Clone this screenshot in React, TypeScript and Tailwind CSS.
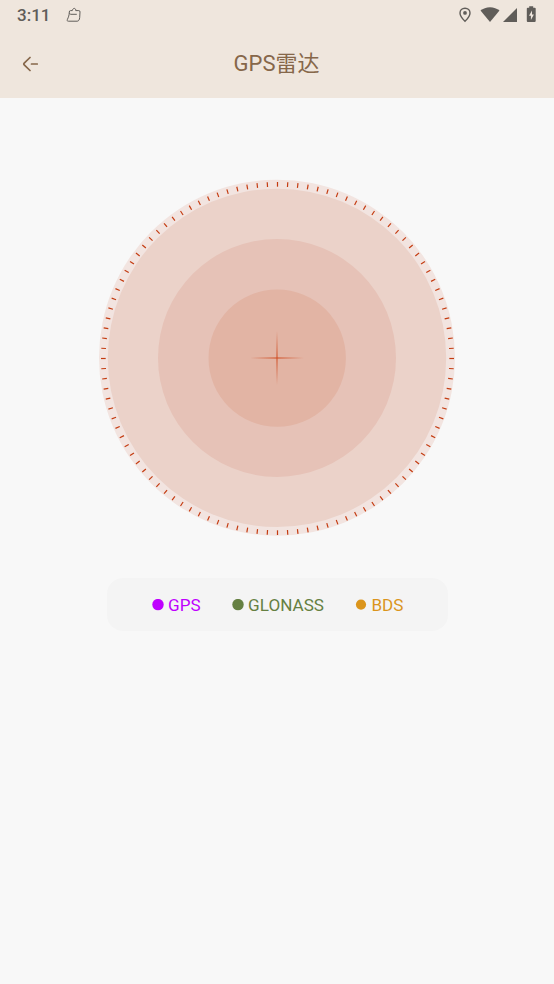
const TICK_COUNT = 108;

const legend = [
  { label: "GPS", text: "text-[#bf00ff]", radius: 5.7 },
  { label: "GLONASS", text: "text-[#658042]", radius: 5.7 },
  { label: "BDS", text: "text-[#db951c]", radius: 5.1 },
];

function StatusBar() {
  return (
    <div className="flex h-[30px] items-center px-[17px] text-[#605d59]">
      <span className="w-[34px] text-[17px] leading-5 font-medium whitespace-nowrap">3:11</span>
      <svg
        className="ml-[15px] h-4 w-4"
        viewBox="0 0 16 16"
        fill="none"
        stroke="currentColor"
        strokeWidth="1"
        strokeLinejoin="round"
      >
        <path d="M4.5 3.6H6.3c.2-1.300 1-2.200 2-2.200s1.600.9 1.400 2.200h3.100c.9 0 1.300.5 1.200 1.400l-.3 5.500c-.2 2.300-1.100 3.700-2.500 3.700H2.300c-1 0-1.400-.6-1-1.500C2.500 10 3.200 8.500 3.300 5c0-.9.4-1.400 1.200-1.400z" />
        <path d="M3.3 6.600l1.500.7h6" />
      </svg>
      <div className="ml-auto flex items-center">
        <svg className="h-4 w-3" viewBox="0 0 12 16" fill="none" stroke="currentColor" strokeWidth="1.4">
          <path d="M6 1.200c-2.900 0-5 2.100-5 4.800C1 9.500 6 14.300 6 14.300s5-4.800 5-8.300c0-2.700-2.100-4.800-5-4.800z" />
          <circle cx="6" cy="5.900" r="1.900" fill="currentColor" stroke="none" />
        </svg>
        <svg className="ml-[9px] h-4 w-5" viewBox="0 0 20 16" fill="currentColor">
          <path d="M.5 3.500C3 1.600 6.300.2 10 .2s7 1.400 9.500 3.300L10 15z" />
        </svg>
        <svg className="ml-[3px] h-4 w-[14px]" viewBox="0 0 14 16" fill="currentColor">
          <path d="M14 1v14H0z" />
        </svg>
        <svg className="ml-[9px] h-4 w-[11px] overflow-visible" viewBox="0 0 11 16" fill="currentColor">
          <path
            fillRule="evenodd"
            d="M3.200-.8h4v1.500h1.600c.5 0 .9.400.9.900v12.500c0 .5-.4.900-.9.900H1.700c-.5 0-.9-.4-.9-.9V1.600c0-.5.4-.9.900-.9h1.500zM6 3.500L3 8.700h1.900v4.200L7.900 7.600H6z"
          />
        </svg>
      </div>
    </div>
  );
}

function Header() {
  return (
    <header className="h-[98px] bg-[#efe6dd]">
      <StatusBar />
      <div className="grid h-[68px] grid-cols-[60px_1fr_60px] items-center text-[#86674a]">
        <button type="button" aria-label="返回" className="ml-[22px] w-4">
          <svg
            className="h-4 w-4"
            viewBox="0 0 16 16"
            fill="none"
            stroke="currentColor"
            strokeWidth="1.700"
            strokeLinecap="round"
            strokeLinejoin="round"
          >
            <path d="M8 1.500L2.200 7.200Q1.400 8 2.200 8.800L8 14.500M9.500 8h5.800" />
          </svg>
        </button>
        <h1 className="pr-px text-center text-[22px] leading-8">GPS雷达</h1>
      </div>
    </header>
  );
}

function Radar() {
  return (
    <svg className="h-[358px] w-[358px]" viewBox="98 179 358 358">
      <defs>
        <radialGradient id="cross" gradientUnits="userSpaceOnUse" cx="277" cy="358" r="27">
          <stop offset="0" stopColor="#cf4d23" stopOpacity="0.55" />
          <stop offset="1" stopColor="#cf4d23" stopOpacity="0" />
        </radialGradient>
      </defs>
      <circle cx="277" cy="357.700" r="178" fill="#f2e4e0" />
      <circle cx="277" cy="357.900" r="169.200" fill="#ebd2c9" />
      <circle cx="277" cy="357.900" r="119" fill="#e6c2b7" />
      <circle cx="277.200" cy="358.100" r="68.700" fill="#e2b4a4" />
      {Array.from({ length: TICK_COUNT }, (_, i) => (
        <line
          key={i}
          x1="277.500"
          x2="277.500"
          y1="182"
          y2="186.700"
          stroke="#c43b10"
          strokeWidth="1.200"
          transform={`rotate(${(i * 360) / TICK_COUNT} 277.5 358.5)`}
        />
      ))}
      <rect x="251" y="357" width="53" height="2" fill="url(#cross)" />
      <rect x="276" y="331" width="2" height="54" fill="url(#cross)" />
    </svg>
  );
}

export default function App() {
  return (
    <div className="min-h-screen bg-[#f8f8f8] font-[Roboto,'Noto_Sans_CJK_SC',sans-serif]">
      <Header />
      <main className="flex flex-col items-center pt-[81px]">
        <Radar />
        <ul className="mt-[41px] flex h-[53px] w-[341px] items-center justify-center gap-[31.5px] rounded-2xl bg-[#f4f4f4] pl-[1.5px]">
          {legend.map((item) => (
            <li key={item.label} className={`flex items-center gap-1 text-[17.1px] leading-6 ${item.text}`}>
              <svg className="h-3 w-3" viewBox="0 0 12 12" fill="currentColor">
                <circle cx="6" cy="5.600" r={item.radius} />
              </svg>
              {item.label}
            </li>
          ))}
        </ul>
      </main>
    </div>
  );
}
